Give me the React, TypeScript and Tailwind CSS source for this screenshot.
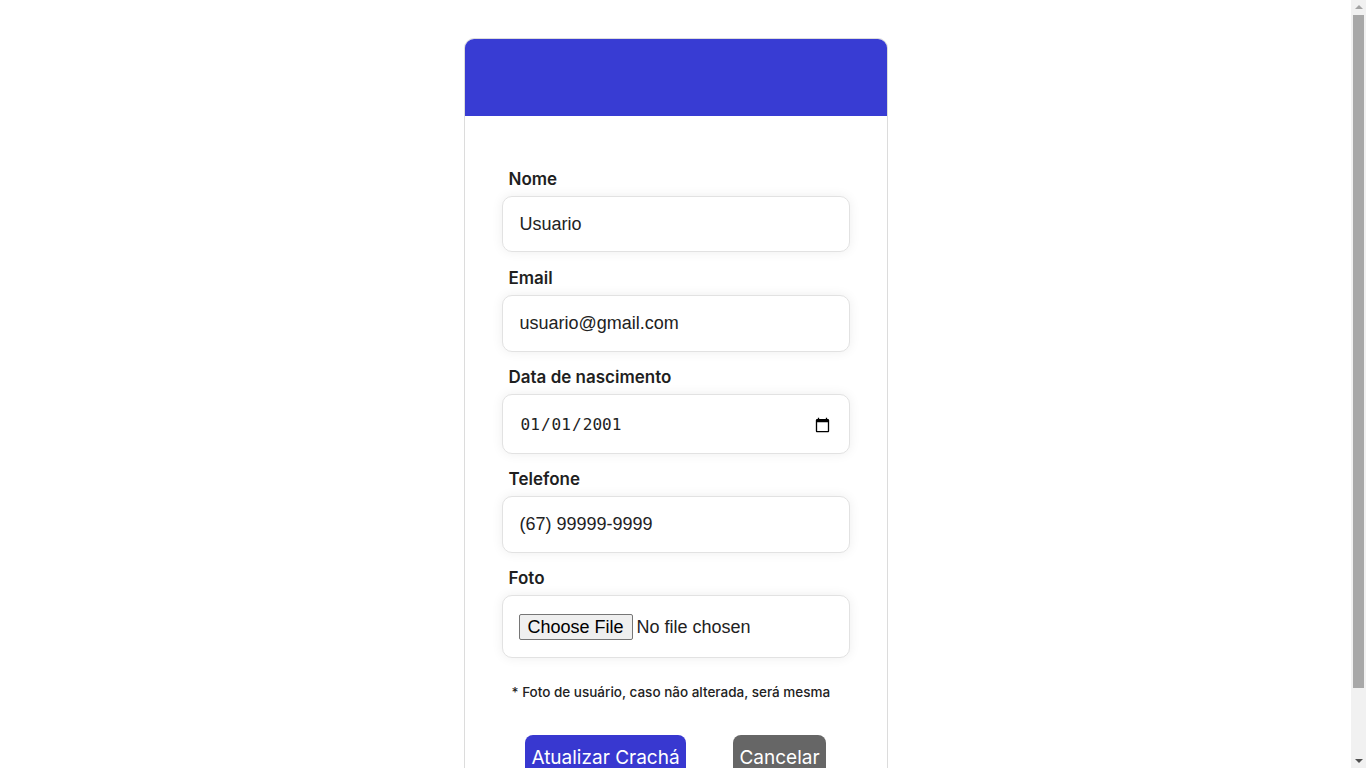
export default function App() {
  const label = "pl-[7px] text-[17px] font-semibold text-[#1f1f1f] font-['Inter','Noto_Sans',sans-serif] leading-[20px]";
  const box =
    "w-full rounded-[10px] border border-[#e2e2e2] bg-white shadow-[0_0_12px_rgba(0,0,0,0.07)] px-[17px] text-[#222] outline-none";
  const sans = "text-[18px] font-['Liberation_Sans',Arial,sans-serif]";

  return (
    <div className="flex h-[768px] overflow-hidden bg-white">
      <div className="flex-1 overflow-y-auto [scrollbar-width:none]">
        <div className="min-h-[836px] pt-[38px]">
          <div className="mx-auto w-[424px] min-h-[798px] overflow-hidden rounded-t-[10px] border border-[#dcdcdc]">
            <div className="h-[77px] bg-[#383cd3]" />
            <form className="mx-auto flex w-[348px] flex-col pt-[53px]">
              <label className={label}>Nome</label>
              <input className={`${box} ${sans} mt-[7px] h-[56px]`} defaultValue="Usuario" />

              <label className={`${label} mt-[16px]`}>Email</label>
              <input className={`${box} ${sans} mt-[7px] h-[57px]`} defaultValue="usuario@gmail.com" />

              <label className={`${label} mt-[15px]`}>Data de nascimento</label>
              <input
                type="date"
                className={`${box} mt-[7px] h-[60px] pt-[3px] pr-[16px] text-[16.1px] font-['DejaVu_Sans_Mono',monospace]`}
                defaultValue="2001-01-01"
              />

              <label className={`${label} mt-[15px]`}>Telefone</label>
              <input className={`${box} ${sans} mt-[7px] h-[57px]`} defaultValue="(67) 99999-9999" />

              <label className={`${label} mt-[15px]`}>Foto</label>
              <div className={`${box} mt-[7px] flex h-[63px] items-center pt-[2px]`}>
                <input
                  type="file"
                  className={`${sans} -ml-[1px] text-[#222] file:mr-[4px] file:rounded-[2px] file:border file:border-[#767676] file:bg-[#efefef] file:px-[8px] file:py-0 file:text-[18px] file:leading-[24px] file:text-black`}
                />
              </div>

              <p className="mt-[24px] pl-[10px] text-[13.5px] font-medium text-[#222] font-['Inter','Noto_Sans',sans-serif]">
                * Foto de usuário, caso não alterada, será mesma
              </p>

              <div className="mt-[33px] flex justify-around">
                <button
                  type="button"
                  className="rounded-[8px] bg-[#3838d0] px-[6px] py-[10px] text-[19px] text-white font-['Inter','Noto_Sans',sans-serif] leading-[26px]"
                >
                  Atualizar Crachá
                </button>
                <button
                  type="button"
                  className="rounded-[8px] bg-[#666666] px-[6px] py-[10px] text-[19px] text-white font-['Inter','Noto_Sans',sans-serif] leading-[26px]"
                >
                  Cancelar
                </button>
              </div>
            </form>
          </div>
        </div>
      </div>

      {/* scrollbar */}
      <div className="flex w-[15px] flex-col items-center bg-[#f1f1f1]">
        <div className="mt-[5px] h-0 w-0 border-x-[4px] border-b-[4px] border-x-transparent border-b-[#a3a3a3]" />
        <div className="mt-[6px] h-[673px] w-[11px] bg-[#a8a8a8]" />
        <div className="mt-auto mb-[5px] h-0 w-0 border-x-[4px] border-t-[4px] border-x-transparent border-t-[#505050]" />
      </div>
    </div>
  );
}
